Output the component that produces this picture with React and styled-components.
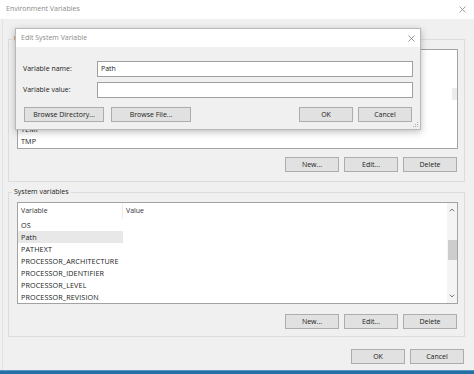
import React from 'react'
import styled, { createGlobalStyle } from 'styled-components'

const GlobalStyle = createGlobalStyle`
  html, body {
    margin: 0;
    padding: 0;
    background: #f0f0f0;
  }
  body {
    font-family: "Open Sans", "Noto Sans", sans-serif;
    font-size: 7px;
    color: #1a1a1a;
  }
`

const systemRows = [
  'OS',
  'Path',
  'PATHEXT',
  'PROCESSOR_ARCHITECTURE',
  'PROCESSOR_IDENTIFIER',
  'PROCESSOR_LEVEL',
  'PROCESSOR_REVISION',
]

// rows above TEMP sit under the edit dialog, so they stay blank
const userRows = ['', '', '', '', '', 'TEMP', 'TMP']

function CloseIcon({ size = 7, color = '#8a8a8a' }) {
  return (
    <svg width={size} height={size} viewBox="0 0 7 7">
      <path d="M0.5 0.5 L6.5 6.5 M6.5 0.5 L0.5 6.5" stroke={color} strokeWidth="0.8" fill="none" />
    </svg>
  )
}

function Chevron({ up }) {
  return (
    <svg width="6" height="4" viewBox="0 0 6 4">
      <path d={up ? 'M0.8 3.3 L3 1 L5.2 3.3' : 'M0.8 0.7 L3 3 L5.2 0.7'} stroke="#6a6a6a" strokeWidth="0.9" fill="none" />
    </svg>
  )
}

function VarList({ rows, selected, shift, height, arrows, header, thumbTop, thumbHeight }) {
  return (
    <ListBox $height={height}>
      <ListBody>
        <Rows $shift={shift}>
          <HeaderRow>
            <HeaderCell $divider>{header && 'Variable'}</HeaderCell>
            <HeaderCell>{header && 'Value'}</HeaderCell>
          </HeaderRow>
          {rows.map((r, i) => (
            <Row key={i}>
              <Cell $selected={r !== '' && r === selected}>{r}</Cell>
              <Cell />
            </Row>
          ))}
        </Rows>
      </ListBody>
      <ScrollBar $arrows={arrows}>
        {arrows && (
          <ScrollArrow>
            <Chevron up />
          </ScrollArrow>
        )}
        <ScrollTrack>
          <Thumb $top={thumbTop} $height={thumbHeight} $faint={!arrows} />
        </ScrollTrack>
        {arrows && (
          <ScrollArrow>
            <Chevron />
          </ScrollArrow>
        )}
      </ScrollBar>
    </ListBox>
  )
}

function ButtonRow() {
  return (
    <GroupButtons>
      <Button>New...</Button>
      <Button>Edit...</Button>
      <Button>Delete</Button>
    </GroupButtons>
  )
}

export default function App() {
  return (
    <>
      <GlobalStyle />
      <Window>
        <TitleBar>
          <TitleText>Environment Variables</TitleText>
          <CloseIcon />
        </TitleBar>
        <Content>
          <Group $bottom={9}>
            <Legend>User variables for Admin</Legend>
            <VarList
              rows={userRows}
              shift={-3}
              height={100}
              thumbTop={38}
              thumbHeight={12}
            />
            <ButtonRow />
          </Group>
          <Group $bottom={7} $gap={10}>
            <Legend>System variables</Legend>
            <VarList
              rows={systemRows}
              selected="Path"
              height={102}
              arrows
              header
              thumbTop={23}
              thumbHeight={20}
            />
            <ButtonRow />
          </Group>
          <Footer>
            <Button>OK</Button>
            <Button>Cancel</Button>
          </Footer>
        </Content>
        <Taskbar />

        <Dialog>
          <DialogTitle>
            <TitleText $dialog>Edit System Variable</TitleText>
            <CloseIcon color="#7c7c7c" />
          </DialogTitle>
          <DialogBody>
            <Form>
              <Label>Variable name:</Label>
              <Input>Path</Input>
              <Label>Variable value:</Label>
              <Input />
            </Form>
            <DialogButtons>
              <ButtonGroup $gap={7}>
                <Button $wide>Browse Directory...</Button>
                <Button $wide>Browse File...</Button>
              </ButtonGroup>
              <ButtonGroup $gap={5}>
                <Button>OK</Button>
                <Button>Cancel</Button>
              </ButtonGroup>
            </DialogButtons>
          </DialogBody>
          <Grip width="5" height="5" viewBox="0 0 5 5">
            <rect x="4" y="0" width="1" height="1" fill="#b0b0b0" />
            <rect x="2" y="2" width="1" height="1" fill="#b0b0b0" />
            <rect x="4" y="2" width="1" height="1" fill="#b0b0b0" />
            <rect x="0" y="4" width="1" height="1" fill="#b0b0b0" />
            <rect x="2" y="4" width="1" height="1" fill="#b0b0b0" />
            <rect x="4" y="4" width="1" height="1" fill="#b0b0b0" />
          </Grip>
        </Dialog>
      </Window>
    </>
  )
}

const Window = styled.div`
  position: relative;
  width: 474px;
  height: 374px;
  overflow: hidden;
  display: flex;
  flex-direction: column;
  background: #f0f0f0;
`

const TitleBar = styled.div`
  height: 19px;
  flex: none;
  background: #ffffff;
  display: flex;
  align-items: center;
  justify-content: space-between;
  padding: 0 8px 1px 6px;
  box-sizing: border-box;
`

const TitleText = styled.span`
  font-size: 7px;
  line-height: 10px;
  color: ${p => (p.$dialog ? '#8c8c8c' : '#8a8a8a')};
`

const Content = styled.div`
  flex: 1;
  display: flex;
  flex-direction: column;
  margin-left: 2px;
  border-left: 1px solid #e2e2e2;
  padding: 15px 9px 0 5px;
  background: #f0f0f0;
`

const Group = styled.fieldset`
  margin: 0 0 5px 0;
  min-width: 0;
  border: 1px solid #dcdcdc;
  padding: 5px 6px ${p => p.$bottom}px 8px;
  display: flex;
  flex-direction: column;
  gap: ${p => p.$gap || 8}px;
`

const Legend = styled.legend`
  margin-left: -5px;
  padding: 0 2px;
  font-size: 7px;
  line-height: 10px;
  color: #1a1a1a;
`

const ListBox = styled.div`
  height: ${p => p.$height}px;
  box-sizing: border-box;
  border: 1px solid #a3a3a3;
  background: #ffffff;
  display: flex;
  overflow: hidden;
`

const ListBody = styled.div`
  flex: 1;
  overflow: hidden;
`

const Rows = styled.div`
  margin-top: ${p => p.$shift || 0}px;
`

const HeaderRow = styled.div`
  display: grid;
  grid-template-columns: 105px 1fr;
  height: 16px;
  align-items: center;
`

const HeaderCell = styled.div`
  padding-left: 3px;
  height: 16px;
  line-height: 16px;
  color: #333333;
  border-right: ${p => (p.$divider ? '1px solid #ececec' : 'none')};
  box-sizing: border-box;
`

const Row = styled.div`
  display: grid;
  grid-template-columns: 105px 1fr;
  height: 12px;
`

const Cell = styled.div`
  padding-left: 3px;
  line-height: 12px;
  font-size: 7.2px;
  letter-spacing: 0.12px;
  white-space: nowrap;
  background: ${p => (p.$selected ? '#e8e8e8' : 'transparent')};
`

const ScrollBar = styled.div`
  width: 10px;
  flex: none;
  display: flex;
  flex-direction: column;
  background: ${p => (p.$arrows ? '#f4f4f4' : '#ffffff')};
`

const ScrollArrow = styled.div`
  height: 14px;
  display: flex;
  align-items: center;
  justify-content: center;
`

const ScrollTrack = styled.div`
  flex: 1;
  display: flex;
  flex-direction: column;
  align-items: flex-end;
`

const Thumb = styled.div`
  margin-top: ${p => p.$top}px;
  height: ${p => p.$height}px;
  width: ${p => (p.$faint ? 5 : 9)}px;
  margin-right: ${p => (p.$faint ? 0 : 0.5)}px;
  background: ${p => (p.$faint ? '#ececec' : '#cdcdcd')};
`

const GroupButtons = styled.div`
  display: flex;
  justify-content: flex-end;
  gap: 5px;
  padding-right: 1px;
`

const Button = styled.div`
  width: ${p => (p.$wide ? 80 : 54)}px;
  height: 15px;
  box-sizing: border-box;
  border: 1px solid #adadad;
  background: #e1e1e1;
  display: flex;
  align-items: center;
  justify-content: center;
  font-size: 7px;
  color: #1a1a1a;
  white-space: nowrap;
`

const Footer = styled.div`
  display: flex;
  justify-content: flex-end;
  gap: 5px;
  margin-top: 7px;
  padding-right: 1px;
`

const Taskbar = styled.div`
  height: 3px;
  flex: none;
  background: #2470a6;
  border-top: 1px solid #5b95bf;
`

const Dialog = styled.div`
  position: absolute;
  left: 15px;
  top: 28px;
  width: 406px;
  height: 102px;
  box-sizing: border-box;
  border: 1px solid #b8b8b8;
  background: #f0f0f0;
  box-shadow: 0 2px 7px rgba(0, 0, 0, 0.26);
  display: flex;
  flex-direction: column;
`

const DialogTitle = styled.div`
  height: 18px;
  flex: none;
  background: #ffffff;
  display: flex;
  align-items: center;
  justify-content: space-between;
  padding: 0 5px 0 5px;
`

const DialogBody = styled.div`
  flex: 1;
  padding: 14px 7px 0 7px;
`

const Form = styled.div`
  display: grid;
  grid-template-columns: 74px 1fr;
  grid-auto-rows: 16px;
  row-gap: 5px;
  align-items: center;
`

const Label = styled.div`
  color: #1a1a1a;
  line-height: 10px;
`

const Input = styled.div`
  height: 16px;
  box-sizing: border-box;
  border: 1px solid #a0a0a0;
  background: #ffffff;
  padding-left: 3px;
  line-height: 14px;
  color: #1a1a1a;
`

const DialogButtons = styled.div`
  display: flex;
  justify-content: space-between;
  margin-top: 9px;
  padding: 0 1px 0 1px;
`

const ButtonGroup = styled.div`
  display: flex;
  gap: ${p => p.$gap}px;
`

const Grip = styled.svg`
  position: absolute;
  right: 2px;
  bottom: 2px;
`
